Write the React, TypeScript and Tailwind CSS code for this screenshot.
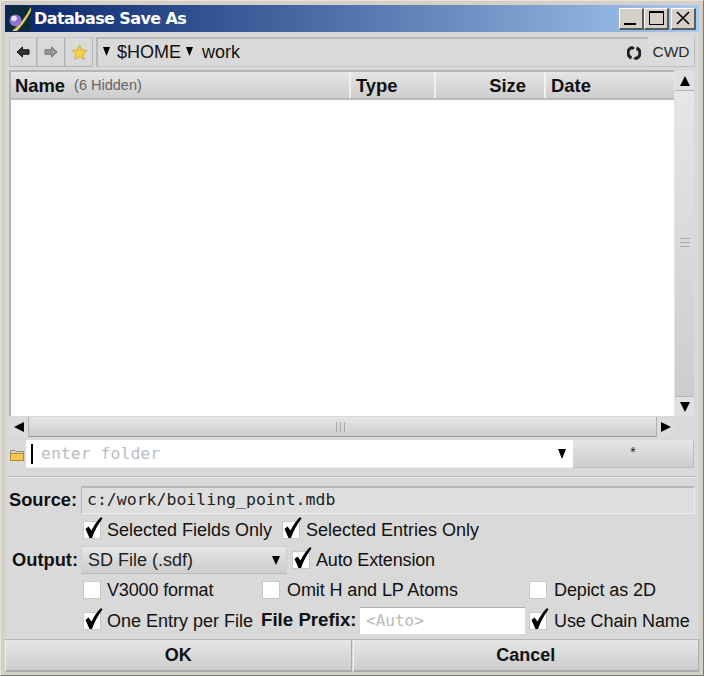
import React from "react";

function Tri({ dir, size = 10, w, h, className = "" }: { dir: "up" | "down" | "left" | "right"; size?: number; w?: number; h?: number; className?: string }) {
  const pts = { up: "6,0 12,12 0,12", down: "0,0 12,0 6,12", left: "12,0 12,12 0,6", right: "0,0 0,12 12,6" }[dir];
  return (
    <svg width={w ?? size} height={h ?? size} viewBox="0 0 12 12" preserveAspectRatio="none" className={`shrink-0 ${className}`}>
      <polygon points={pts} fill="#000" />
    </svg>
  );
}

function Check({ on, label, tight }: { on?: boolean; label: string; tight?: boolean }) {
  return (
    <div className="flex items-center h-[24px] whitespace-nowrap">
      <div className="relative w-[18px] h-[18px] bg-white border border-[#c8c8c8] shrink-0">
        {on && (
          <svg width="18" height="21" viewBox="0 0 18 21" className="absolute left-[1px] top-[-5px]">
            <path d="M0.5 12 L3.5 9.5 L6.5 13.5 C9 8 12 4 16 0 L17.5 1.5 C13 7 9.5 14 7 21 L4.5 21 Z" fill="#000" />
          </svg>
        )}
      </div>
      <span className={tight ? "ml-[7px] text-[18px] tracking-[-0.1px] leading-none text-[#111]" : "ml-[6px] text-[18px] leading-none text-[#111]"}>{label}</span>
    </div>
  );
}

function Grad({ className = "", children }: { className?: string; children?: React.ReactNode }) {
  return (
    <div className={`bg-gradient-to-b from-[#e6e6e6] to-[#cdcdcd] ${className}`}>{children}</div>
  );
}

function ToolBtn({ children }: { children: React.ReactNode }) {
  return (
    <div className="w-[28px] h-[30px] flex items-center justify-center border border-[#c4c4c4] border-b-[#b4b4b4] border-r-[#b4b4b4] bg-[#d9d9d9]">
      {children}
    </div>
  );
}

function Arrow({ flip, fill }: { flip?: boolean; fill: string }) {
  return (
    <svg width="14" height="12" viewBox="0 0 14 12" className={flip ? "-scale-x-100" : ""}>
      <path d="M1 6 L6.5 1 V3.8 H13 V8.2 H6.5 V11 Z" fill={fill} stroke={flip ? "#6f6f6f" : "#111"} strokeWidth="1" />
    </svg>
  );
}

function WinBtn({ children, className = "" }: { children: React.ReactNode; className?: string }) {
  return (
    <div className={`w-[25px] h-[22px] flex items-center justify-center bg-[#d4d0c8] border-t border-l border-t-white border-l-white border-b-2 border-r-2 border-b-[#5a5a5a] border-r-[#5a5a5a] ${className}`}>
      {children}
    </div>
  );
}

function HeadCell({ className = "", children }: { className?: string; children: React.ReactNode }) {
  return (
    <div className={`h-full flex items-center pt-[1px] border-r-2 border-r-[#f0f0f0] font-bold text-[18.4px] text-[#111] ${className}`}>
      {children}
    </div>
  );
}

export default function App() {
  return (
    <div className="w-[704px] h-[676px] overflow-hidden bg-[#d4d0c8] border border-[#7a7a7a] border-t-[#e8e4dc] border-l-[#e8e4dc] font-['Liberation_Sans',Arial,sans-serif] p-[4px] pb-[3px]">
      <div className="w-full h-full flex flex-col bg-[#d9d9d9]">
        {/* Title bar */}
        <div className="h-[27px] shrink-0 flex items-center bg-gradient-to-r from-[#0a246a] to-[#a6caf0]">
          <svg width="24" height="25" viewBox="0 0 24 25" className="shrink-0 ml-[2px]">
            <rect width="24" height="25" fill="#0b2a3a" />
            <path d="M5 25 C13 19 19 10 24 1 L24 5 C20 13 14 21 10 25 Z" fill="#e8c860" />
            <circle cx="8.5" cy="14.5" r="6" fill="#8f6fd0" />
            <circle cx="7" cy="12.5" r="2.8" fill="#e8dcf8" />
          </svg>
          <span className="ml-[3px] pt-[1px] text-white font-bold text-[16px] font-['DejaVu_Sans',sans-serif] tracking-[-0.6px]">Database Save As</span>
          <div className="ml-auto flex pr-[3px]">
            <WinBtn>
              <div className="w-[12px] h-[2px] bg-black mt-[12px] mr-[3px]" />
            </WinBtn>
            <WinBtn>
              <div className="w-[15px] h-[14px] border border-black border-t-2" />
            </WinBtn>
            <WinBtn className="ml-[2px]">
              <svg width="14" height="14" viewBox="0 0 14 14">
                <path d="M1 1 L13 13 M13 1 L1 13" stroke="#000" strokeWidth="1.6" />
              </svg>
            </WinBtn>
          </div>
        </div>

        {/* Toolbar */}
        <div className="mt-[5px] mx-[4px] h-[30px] shrink-0 flex items-stretch">
          <ToolBtn><Arrow fill="#333" /></ToolBtn>
          <ToolBtn><Arrow flip fill="#999" /></ToolBtn>
          <ToolBtn>
            <svg width="17" height="17" viewBox="0 0 24 24">
              <path d="M12 1.5 L15 8.6 L22.7 9.3 L16.9 14.4 L18.6 22 L12 18 L5.4 22 L7.1 14.4 L1.3 9.3 L9 8.6 Z" fill="#f8d040" stroke="#c8a040" strokeWidth="1" />
            </svg>
          </ToolBtn>
          <div className="ml-[3px] flex-1 flex items-center border-t-2 border-l-2 border-[#b8b8b8] border-b border-r-0 border-b-[#c4c4c4] pl-[5px] text-[18px] text-[#111]">
            <Tri dir="down" w={7} h={9} className="mb-[2px]" />
            <span className="ml-[7px]">$HOME</span>
            <Tri dir="down" w={7} h={9} className="ml-[5px] mb-[2px]" />
            <span className="ml-[9px]">work</span>
            <svg width="14" height="14" viewBox="0 0 14 14" className="ml-auto mr-[7px]">
              <path d="M5.5 1.5 A5.5 5.5 0 0 0 4.5 12 M8.5 12.5 A5.5 5.5 0 0 0 9.5 2" stroke="#222" strokeWidth="3" fill="none" />
              <path d="M5 0 L8 2 L5 4 Z M9 10.5 L6 12.5 L9 14 Z" fill="#222" />
            </svg>
          </div>
          <div className="w-[47px] flex items-center justify-center bg-[#dcdcdc] border-r border-b border-[#bdbdbd] text-[15.5px] text-[#2a2a2a]">CWD</div>
        </div>

        {/* List area */}
        <div className="mt-[3px] mx-[4px] h-[367px] shrink-0 flex">
          <div className="w-[665px] flex flex-col">
            <div className="flex-1 flex flex-col border-t-2 border-l-2 border-[#b4b4b4]">
              <Grad className="h-[28px] shrink-0 flex items-center border-b-2 border-[#bcbcbc]">
                <HeadCell className="w-[340px] pl-[4px]">
                  Name<span className="ml-[9px] font-normal text-[14.5px] text-[#666]">(6 Hidden)</span>
                </HeadCell>
                <HeadCell className="w-[85px] pl-[5px]">Type</HeadCell>
                <HeadCell className="w-[110px] justify-end pr-[18px]">Size</HeadCell>
                <div className="flex-1 pl-[5px] pt-[1px] font-bold text-[18.4px] text-[#111]">Date</div>
              </Grad>
              <div className="flex-1 bg-white" />
            </div>
            <Grad className="h-[20px] mt-[1px] ml-[1px] shrink-0 flex items-center border-b border-[#9a9a9a]">
              <div className="w-[19px] h-[20px] flex items-center justify-center bg-[#dcdcdc] border-r border-[#b0b0b0]">
                <Tri dir="left" />
              </div>
              <div className="flex-1 flex justify-center pr-[4px]">
                <div className="w-[9px] h-[10px] border-x border-[#aaa] flex justify-center"><div className="w-px h-full bg-[#aaa]" /></div>
              </div>
              <div className="w-[18px] h-[20px] flex items-center justify-center bg-[#dcdcdc] border-l border-[#b0b0b0]">
                <Tri dir="right" />
              </div>
            </Grad>
          </div>
          <div className="w-[20px] h-[345px] mt-[1px] flex flex-col border-l border-[#e4e4e4]">
            <div className="h-[20px] flex items-center justify-center bg-[#e0e0e0] border-b border-[#b4b4b4]">
              <Tri dir="up" />
            </div>
            <Grad className="flex-1 flex items-center justify-center pb-[2px]">
              <div className="w-[10px] h-[9px] border-y border-[#aaa] flex items-center"><div className="w-full h-px bg-[#aaa]" /></div>
            </Grad>
            <div className="h-[20px] flex items-center justify-center bg-[#e0e0e0] border-t border-[#b4b4b4]">
              <Tri dir="down" />
            </div>
          </div>
        </div>

        {/* Folder row */}
        <div className="mt-[3px] mx-[5px] h-[28px] shrink-0 flex items-stretch">
          <div className="w-[16px] shrink-0 flex items-center">
            <svg width="14" height="13" viewBox="0 0 14 13">
              <path d="M0.5 2.5 H5 L6 3.5 H13.5 V12.5 H0.5 Z" fill="#c9d4de" stroke="#9a8a60" />
              <rect x="0.5" y="5.5" width="13" height="7" fill="#f2c850" stroke="#b08a30" />
            </svg>
          </div>
          <div className="w-[547px] bg-white flex items-center border-b border-[#f0f0f0]">
            <div className="ml-[5px] w-[2px] h-[20px] bg-black shrink-0" />
            <span className="ml-[8px] pt-[2px] font-['DejaVu_Sans_Mono',monospace] text-[16.5px] text-[#b9bfc6]">enter folder</span>
            <Tri dir="down" w={8} h={10} className="ml-auto mr-[7px]" />
          </div>
          <Grad className="flex-1 flex justify-center border-r border-b border-[#bdbdbd] pt-[2px] text-[14px] text-[#222]">*</Grad>
        </div>

        {/* Separator */}
        <div className="mt-[8px] mx-[4px] h-[2px] shrink-0 bg-[#b8b8b8] border-b border-[#e8e8e8]" />

        {/* Source */}
        <div className="mt-[8px] mx-[4px] h-[28px] shrink-0 flex items-center">
          <span className="w-[72px] shrink-0 font-bold text-[18.3px] text-[#111]">Source:</span>
          <div className="flex-1 h-full flex items-center pl-[5px] bg-[#dedede] border-t-2 border-l border-[#b8b8b8] border-r border-r-[#eaeaea] border-b border-b-[#eaeaea] font-['DejaVu_Sans_Mono',monospace] text-[16.5px] text-[#222]">
            c:/work/boiling_point.mdb
          </div>
        </div>

        {/* Selected */}
        <div className="mt-[4px] ml-[78px] flex shrink-0">
          <div className="w-[199px]"><Check on label="Selected Fields Only" /></div>
          <Check on label="Selected Entries Only" />
        </div>

        {/* Output */}
        <div className="mt-[4px] ml-[7px] h-[28px] flex items-center shrink-0">
          <span className="w-[69px] shrink-0 font-bold text-[18.3px] text-[#111]">Output:</span>
          <Grad className="w-[206px] h-full flex items-center pl-[6px] border border-[#d0d0d0] border-b-[#bcbcbc] text-[18px] text-[#222]">
            SD File (.sdf)
            <Tri dir="down" w={8} h={9} className="ml-auto mr-[6px]" />
          </Grad>
          <div className="ml-[5px] [&_span]:tracking-[-0.15px]"><Check on label="Auto Extension" /></div>
        </div>

        {/* V3000 */}
        <div className="mt-[4px] ml-[78px] flex shrink-0">
          <div className="w-[179px] [&_span]:tracking-[-0.15px]"><Check label="V3000 format" /></div>
          <div className="w-[267px]"><Check tight label="Omit H and LP Atoms" /></div>
          <Check tight label="Depict as 2D" />
        </div>

        {/* One entry */}
        <div className="mt-[5px] ml-[78px] h-[27px] flex items-center shrink-0">
          <div className="w-[178px]"><Check on label="One Entry per File" /></div>
          <span className="w-[99px] shrink-0 font-bold text-[18.7px] text-[#111]">File Prefix:</span>
          <div className="w-[165px] h-full flex items-center pl-[6px] bg-white border-t border-[#b0b0b0] font-['DejaVu_Sans_Mono',monospace] text-[16px] text-[#bbb]">&lt;Auto&gt;</div>
          <div className="ml-[4px]"><Check on tight label="Use Chain Name" /></div>
        </div>

        {/* Buttons */}
        <div className="mt-auto h-[33px] shrink-0 flex gap-[1px] border-t border-[#b4b4b4]">
          <Grad className="flex-1 flex items-center justify-center border-b-2 border-r border-[#aaa] border-l border-l-[#f0f0f0] font-bold text-[18px] text-[#111]">OK</Grad>
          <Grad className="flex-1 flex items-center justify-center border-b-2 border-r border-[#aaa] border-l border-l-[#f0f0f0] font-bold text-[18px] text-[#111]">Cancel</Grad>
        </div>
      </div>
    </div>
  );
}
